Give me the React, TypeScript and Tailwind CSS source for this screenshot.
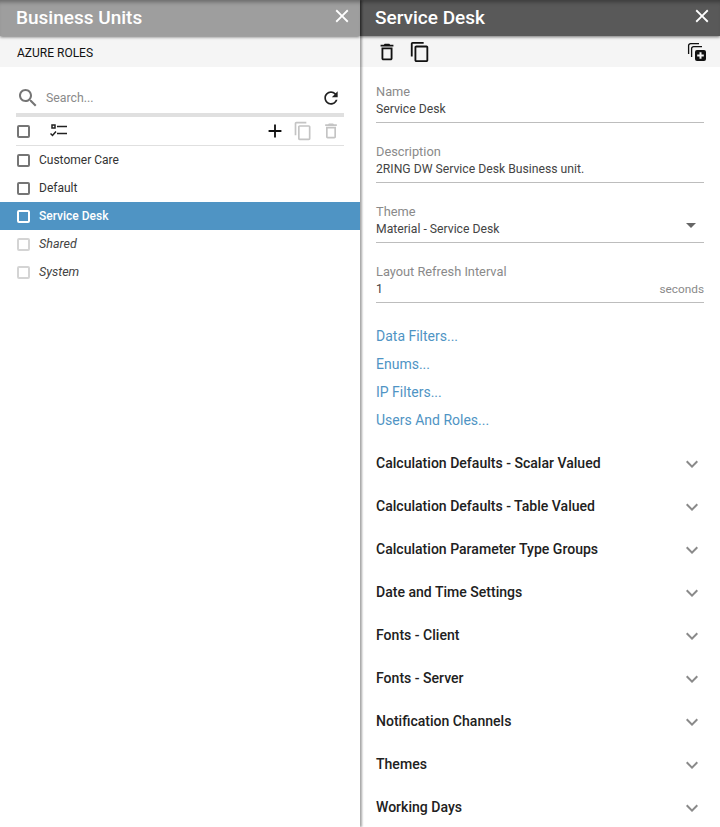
const I = ({ d, s = 24, c = "" }: { d: string; s?: number; c?: string }) => (
  <svg width={s} height={s} viewBox="0 0 24 24" fill="currentColor" className={`shrink-0 ${c}`}><path d={d} /></svg>
);
const P = {
  del: "M6 19c0 1.1.9 2 2 2h8c1.1 0 2-.9 2-2V7H6v12zM8 9h8v10H8V9zm7.5-5l-1-1h-5l-1 1H5v2h14V4z",
  copy: "M16 1H4c-1.1 0-2 .9-2 2v14h2V3h12V1zm3 4H8c-1.1 0-2 .9-2 2v14c0 1.1.9 2 2 2h11c1.1 0 2-.9 2-2V7c0-1.1-.9-2-2-2zm0 16H8V7h11v14z",
  refresh: "M17.65 6.35C16.2 4.9 14.21 4 12 4c-4.42 0-7.99 3.58-7.99 8s3.57 8 7.99 8c3.73 0 6.84-2.55 7.73-6h-2.08c-.82 2.33-3.04 4-5.65 4-3.31 0-6-2.69-6-6s2.69-6 6-6c1.66 0 3.14.69 4.22 1.78L13 11h7V4l-2.35 2.35z",
  search: "M15.5 14h-.79l-.28-.27C15.41 12.59 16 11.11 16 9.5 16 5.91 13.09 3 9.5 3S3 5.91 3 9.5 5.91 16 9.5 16c1.61 0 3.09-.59 4.23-1.57l.27.28v.79l5 4.99L20.49 19l-4.99-5zm-6 0C7.01 14 5 11.99 5 9.5S7.01 5 9.5 5 14 7.01 14 9.5 11.99 14 9.5 14z",
  more: "M16.59 8.59L12 13.17 7.41 8.59 6 10l6 6 6-6z",
  close: "M19 6.41L17.59 5 12 10.59 6.41 5 5 6.41 10.59 12 5 17.59 6.41 19 12 13.41 17.59 19 19 17.59 13.41 12z",
  add: "M19 13h-6v6h-2v-6H5v-2h6V5h2v6h6v2z",
};

const Box = ({ c = "border-[#757575]" }: { c?: string }) => (
  <span className={`block w-[13px] h-[13px] border-2 rounded-[2px] shrink-0 box-border ${c}`} />
);

const Header = ({ title, bg, pl }: { title: string; bg: string; pl: string }) => (
  <div className={`relative z-10 h-[36px] shrink-0 flex items-center justify-between pr-[7px] text-white shadow-[0_1px_3px_rgba(0,0,0,0.55),inset_0_5px_4px_-3px_rgba(0,0,0,0.35)] ${pl} ${bg}`}>
    <span className="text-[19px] font-medium leading-[36px] -mt-[1px]">{title}</span>
    <I d={P.close} s={22} c="-mt-[4px]" />
  </div>
);

const Row = ({ label, state }: { label: string; state?: "sel" | "off" }) => (
  <div className={`h-[28px] flex items-center pl-[17px] gap-[9px] ${state === "sel" ? "bg-[#4f94c4] text-white font-medium text-[12px]" : state === "off" ? "italic text-[#444] text-[12.5px]" : "text-[#333] text-[12px]"}`}>
    <Box c={state === "sel" ? "border-white" : state === "off" ? "border-[#d4d4d4]" : "border-[#757575]"} />
    <span>{label}</span>
  </div>
);

const Field = ({ label, value, right, mb = "mb-[20px]" }: { label: string; value: string; right?: React.ReactNode; mb?: string }) => (
  <div className={`border-b border-[#bdbdbd] h-[40px] box-border ${mb}`}>
    <div className="text-[12.8px] leading-[16px] text-[#8a8a8a] pt-[1px] h-[18px]">{label}</div>
    <div className="flex items-center justify-between h-[17px] text-[12.2px] text-[#444]">
      <span>{value}</span>
      {right}
    </div>
  </div>
);

const sections = [
  "Calculation Defaults - Scalar Valued",
  "Calculation Defaults - Table Valued",
  "Calculation Parameter Type Groups",
  "Date and Time Settings",
  "Fonts - Client",
  "Fonts - Server",
  "Notification Channels",
  "Themes",
  "Working Days",
];

export default function App() {
  return (
    <div className="w-[720px] h-[827px] overflow-hidden flex bg-white font-['Roboto',sans-serif]">
      <div className="relative z-20 w-[360px] shrink-0 flex flex-col bg-white shadow-[2px_0_2px_rgba(0,0,0,0.35)]">
        <Header title="Business Units" bg="bg-[#9e9e9e]" pl="pl-4" />
        <div className="h-[31px] shrink-0 bg-[#f5f5f5] flex items-center pl-[17px] pt-[3px] text-[12px] text-[#111]">AZURE ROLES</div>
        <div className="pl-4 pr-4">
          <div className="h-[50px] pt-[16px] flex items-center border-b-[4px] border-[#e0e0e0] box-border">
            <I d={P.search} s={24} c="text-[#757575]" />
            <span className="ml-[6px] text-[12.3px] text-[#8a8a8a]">Search...</span>
            <I d={P.refresh} s={20} c="ml-auto text-[#212121] mr-[3px]" />
          </div>
          <div className="h-[29px] box-border flex items-center border-b border-[#e0e0e0]">
            <span className="ml-[1px] mt-[1px]"><Box /></span>
            <svg width="18" height="14" viewBox="0 0 18 14" className="ml-[20px] text-[#212121]" fill="none" stroke="currentColor">
              <rect x="2" y="1" width="3" height="3" strokeWidth="1.5" />
              <path d="M7 2.5h10M7 9.5h10" strokeWidth="1.5" />
              <path d="M0.5 9.5l2 2 3.5-4" strokeWidth="1.5" />
            </svg>
            <I d={P.add} s={22} c="ml-auto text-[#111]" />
            <I d={P.copy} s={20} c="text-[#c4c4c4] ml-[7px]" />
            <I d={P.del} s={20} c="text-[#c4c4c4] ml-[8px] mr-[3px]" />
          </div>
        </div>
        <div>
          <Row label="Customer Care" />
          <Row label="Default" />
          <Row label="Service Desk" state="sel" />
          <Row label="Shared" state="off" />
          <Row label="System" state="off" />
        </div>
      </div>
      <div className="relative flex-1 flex flex-col">
        <Header title="Service Desk" bg="bg-[#595959]" pl="pl-[15px]" />
        <div className="h-[31px] shrink-0 bg-[#f5f5f5] flex items-center pl-[16px] pr-[13px] pt-[1px] text-[#111]">
          <I d={P.del} s={22} />
          <I d={P.copy} s={22} c="ml-[11px]" />
          <svg width="20" height="20" viewBox="0 0 20 20" className="ml-auto" fill="none" stroke="currentColor" strokeWidth="1.3">
            <path d="M1.6 12V3.6a2 2 0 0 1 2-2H12" />
            <path d="M4.6 15V6.6a2 2 0 0 1 2-2H15" />
            <rect x="8" y="8" width="11" height="11" rx="2" fill="currentColor" stroke="none" />
            <path d="M13.5 10.2v6.6M10.2 13.5h6.6" stroke="#f5f5f5" strokeWidth="2" />
          </svg>
        </div>
        <div className="pl-[16px] pr-4 pt-[16px]">
          <Field label="Name" value="Service Desk" />
          <Field label="Description" value="2RING DW Service Desk Business unit." />
          <Field label="Theme" value="Material - Service Desk" right={<span className="w-0 h-0 border-x-[5px] border-x-transparent border-t-[5px] border-t-[#666] mr-[8px] -mt-[9px]" />} />
          <Field label="Layout Refresh Interval" value="1" mb="mb-[19px]" right={<span className="text-[#8a8a8a] text-[11.8px]">seconds</span>} />
          {["Data Filters...", "Enums...", "IP Filters...", "Users And Roles..."].map((t) => (
            <div key={t} className="h-[28px] flex items-center text-[14px] text-[#4f94c4]">{t}</div>
          ))}
          <div className="mt-[8px]">
            {sections.map((t) => (
              <div key={t} className="h-[43px] flex items-center justify-between text-[14.05px] font-medium text-[#212121]">
                <span>{t}</span>
                <I d={P.more} s={24} c="text-[#8a8a8a] mt-[1px]" />
              </div>
            ))}
          </div>
        </div>
      </div>
    </div>
  );
}
